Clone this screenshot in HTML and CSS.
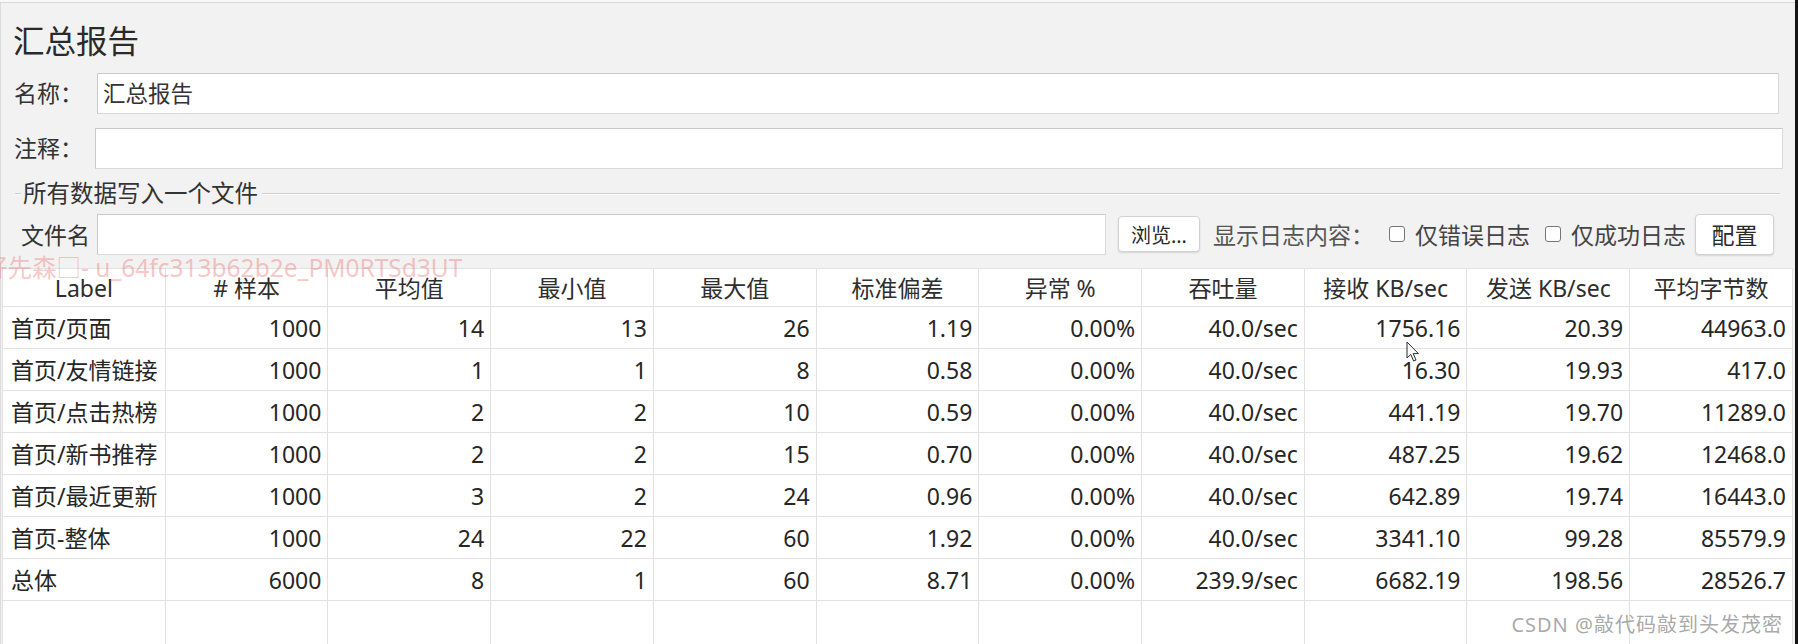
FILE: index.html
```html
<!DOCTYPE html>
<html lang="zh-CN">
<head>
<meta charset="utf-8">
<title>汇总报告</title>
<link rel="stylesheet" href="styles.css">
</head>
<body>
<div class="screen">
  <div class="panel">
    <h1 class="title">汇总报告</h1>
    <div class="field-row name-row">
      <span class="field-label">名称：</span>
      <div class="input">汇总报告</div>
    </div>
    <div class="field-row comment-row">
      <span class="field-label">注释：</span>
      <div class="input"></div>
    </div>
    <div class="group-title">
      <span class="rule short"></span>
      <span class="legend">所有数据写入一个文件</span>
      <span class="rule"></span>
    </div>
    <div class="file-row">
      <span class="file-label">文件名</span>
      <div class="input"></div>
      <button class="btn browse">浏览…</button>
      <span class="log-label">显示日志内容：</span>
      <span class="check"><span class="box"></span>仅错误日志</span>
      <span class="check"><span class="box"></span>仅成功日志</span>
      <button class="btn config">配置</button>
    </div>
    <div class="table-wrap">
      <table class="stats">
        <thead>
          <tr>
            <th>Label</th><th># 样本</th><th>平均值</th><th>最小值</th><th>最大值</th><th>标准偏差</th><th>异常 %</th><th>吞吐量</th><th>接收 KB/sec</th><th>发送 KB/sec</th><th>平均字节数</th>
          </tr>
        </thead>
        <tbody>
          <tr><td class="label">首页/页面</td><td>1000</td><td>14</td><td>13</td><td>26</td><td>1.19</td><td>0.00%</td><td>40.0/sec</td><td>1756.16</td><td>20.39</td><td>44963.0</td></tr>
          <tr><td class="label">首页/友情链接</td><td>1000</td><td>1</td><td>1</td><td>8</td><td>0.58</td><td>0.00%</td><td>40.0/sec</td><td>16.30</td><td>19.93</td><td>417.0</td></tr>
          <tr><td class="label">首页/点击热榜</td><td>1000</td><td>2</td><td>2</td><td>10</td><td>0.59</td><td>0.00%</td><td>40.0/sec</td><td>441.19</td><td>19.70</td><td>11289.0</td></tr>
          <tr><td class="label">首页/新书推荐</td><td>1000</td><td>2</td><td>2</td><td>15</td><td>0.70</td><td>0.00%</td><td>40.0/sec</td><td>487.25</td><td>19.62</td><td>12468.0</td></tr>
          <tr><td class="label">首页/最近更新</td><td>1000</td><td>3</td><td>2</td><td>24</td><td>0.96</td><td>0.00%</td><td>40.0/sec</td><td>642.89</td><td>19.74</td><td>16443.0</td></tr>
          <tr><td class="label">首页-整体</td><td>1000</td><td>24</td><td>22</td><td>60</td><td>1.92</td><td>0.00%</td><td>40.0/sec</td><td>3341.10</td><td>99.28</td><td>85579.9</td></tr>
          <tr><td class="label">总体</td><td>6000</td><td>8</td><td>1</td><td>60</td><td>8.71</td><td>0.00%</td><td>239.9/sec</td><td>6682.19</td><td>198.56</td><td>28526.7</td></tr>
          <tr class="filler"><td></td><td></td><td></td><td></td><td></td><td></td><td></td><td></td><td></td><td></td><td></td></tr>
        </tbody>
      </table>
    </div>
  </div>
  <div class="edge"></div>
  <div class="watermark">好先森□- u_64fc313b62b2e_PM0RTSd3UT</div>
  <div class="csdn">CSDN @敲代码敲到头发茂密</div>
  <svg class="pointer" width="15" height="22" viewBox="0 0 15 22" aria-hidden="true">
    <path d="M1 1 L1 17 L4.8 13.4 L7.6 20 L10 19 L7.2 12.6 L12.4 12.6 Z" fill="#ffffff" fill-opacity="0.8" stroke="#2a2a2a" stroke-width="1" stroke-linejoin="round"/>
  </svg>
</div>
</body>
</html>
```

FILE: styles.css
```css
* { box-sizing: border-box; }

html, body {
  margin: 0;
  padding: 0;
}

body {
  font-family: "Noto Sans", "Noto Sans CJK SC", sans-serif;
  color: #2c2c2c;
  background: #f8f8f8;
}

.screen {
  position: relative;
  width: 1798px;
  height: 644px;
  overflow: hidden;
  display: flex;
  background: #f8f8f8;
}

.panel {
  width: 1795px;
  flex: none;
  margin-top: 2px;
  background: #f2f2f2;
  border-top: 1px solid #d8d8d8;
  border-left: 1px solid #dcdcdc;
  display: flex;
  flex-direction: column;
}

.edge {
  width: 3px;
  flex: none;
  background: #151515;
}

.title {
  margin: 18px 0 12px;
  padding-left: 12px;
  font-size: 31.5px;
  line-height: 40px;
  font-weight: 400;
  color: #2a2a2a;
}

.field-row {
  display: flex;
  align-items: center;
  height: 41px;
  padding-left: 13px;
}

.field-label {
  flex: none;
  font-size: 23px;
  line-height: 41px;
  color: #333;
}

.name-row { margin-right: 16px; }
.name-row .field-label { width: 83px; }

.comment-row {
  margin-top: 14px;
  margin-right: 12px;
}
.comment-row .field-label { width: 81px; }

.input {
  flex: 1;
  height: 41px;
  background: #fff;
  border: 1px solid;
  border-color: #c9c9c9 #d9d9d9 #d9d9d9 #c9c9c9;
  padding-left: 5px;
  font-size: 22.5px;
  line-height: 39px;
  color: #333;
  white-space: nowrap;
}

.group-title {
  display: flex;
  align-items: center;
  height: 24px;
  margin-top: 12px;
  padding-left: 14px;
  margin-right: 15px;
}

.rule {
  flex: 1;
  height: 2px;
  margin-top: 2px;
  border-top: 1px solid #cfcfcf;
  border-bottom: 1px solid #fbfbfb;
}

.rule.short {
  flex: none;
  width: 6px;
}

.legend {
  font-size: 23.5px;
  line-height: 24px;
  padding: 0 4px 0 2px;
  color: #333;
}

.file-row {
  display: flex;
  align-items: center;
  height: 42px;
  margin-top: 8px;
  padding-left: 20px;
  padding-right: 21px;
}

.file-label {
  flex: none;
  width: 76px;
  font-size: 23px;
  color: #333;
}

.btn {
  flex: none;
  padding: 0;
  background: #fff;
  border: 1px solid #d2d2d2;
  border-radius: 4px;
  box-shadow: 0 1px 2px rgba(0, 0, 0, 0.12);
  font-family: inherit;
  color: #2a2a2a;
}

.browse {
  margin-left: 12px;
  width: 82px;
  height: 36px;
  font-size: 20px;
}

.log-label {
  flex: none;
  margin-left: 13px;
  width: 176px;
  font-size: 23px;
  color: #555;
}

.check {
  flex: none;
  display: flex;
  align-items: center;
  font-size: 23px;
  color: #444;
}

.check + .check { margin-left: 15px; }

.box {
  width: 16px;
  height: 16px;
  margin-right: 10px;
  background: #fff;
  border: 1px solid #767676;
  border-radius: 3px;
}

.config {
  margin-left: 9px;
  width: 79px;
  height: 41px;
  font-size: 23px;
}

.table-wrap {
  flex: 1;
  margin: 13px 2px 0 1px;
  background: #fff;
  overflow: hidden;
}

.stats {
  width: 100%;
  border-collapse: collapse;
  table-layout: fixed;
  font-size: 23px;
  color: #262626;
}

.stats th,
.stats td {
  border: 1px solid #e2e2e2;
  padding: 0 6px;
  white-space: nowrap;
  overflow: hidden;
  line-height: 30px;
}

.stats th {
  height: 38px;
  font-weight: 400;
  text-align: center;
  color: #2e2e2e;
}

.stats td {
  height: 42px;
  text-align: right;
}

.stats td.label {
  text-align: left;
  padding-left: 8px;
}

.stats tr.filler td {
  height: 80px;
}

.watermark {
  position: absolute;
  left: -17px;
  top: 256px;
  font-size: 24.5px;
  line-height: 24px;
  color: rgba(238, 110, 110, 0.4);
  white-space: nowrap;
  pointer-events: none;
}

.csdn {
  position: absolute;
  right: 15px;
  top: 612px;
  font-size: 20px;
  line-height: 26px;
  letter-spacing: 1px;
  color: rgba(130, 130, 130, 0.7);
  white-space: nowrap;
}

.pointer {
  position: absolute;
  left: 1406px;
  top: 341px;
}
```
